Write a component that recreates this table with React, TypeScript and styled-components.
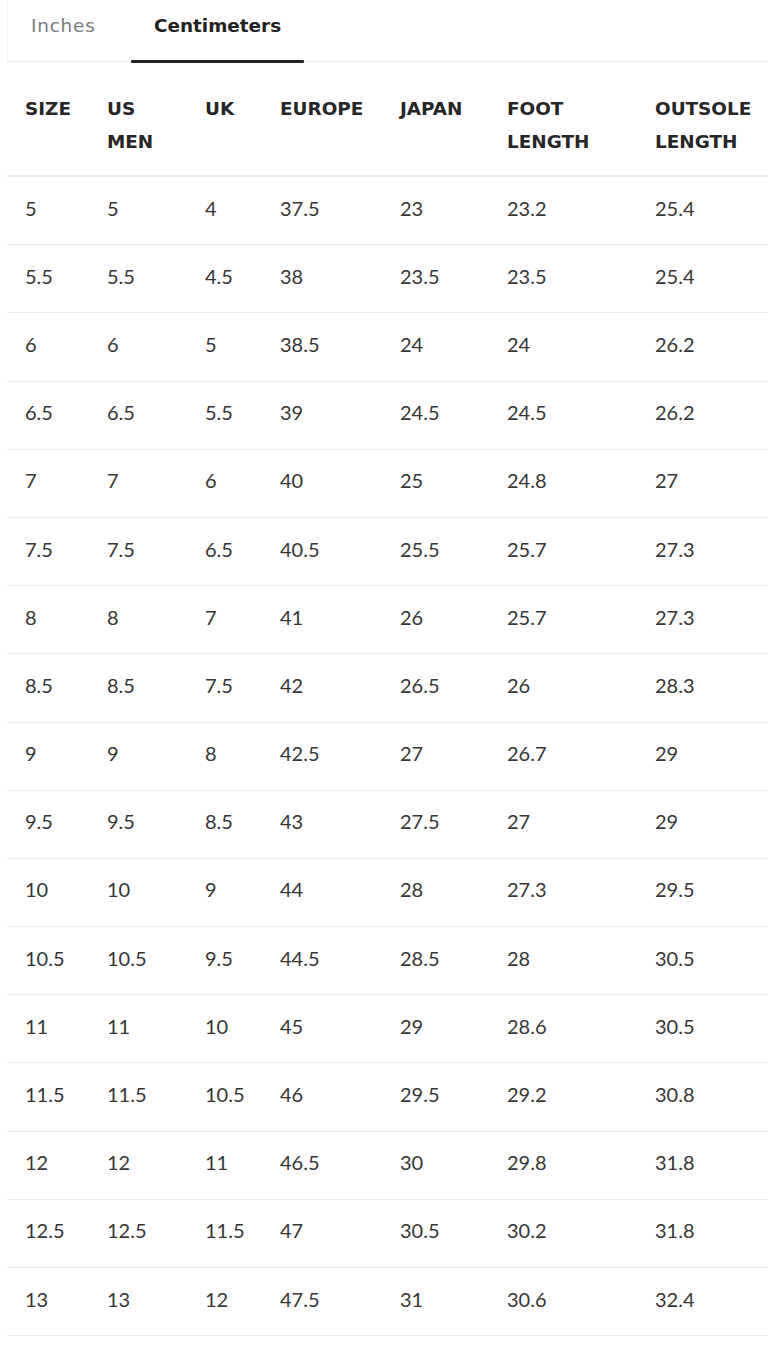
import React from "react";
import styled, { createGlobalStyle } from "styled-components";

const Global = createGlobalStyle`
  html, body { margin: 0; padding: 0; background: #fff; }
  body { font-family: "Lato", "Open Sans", sans-serif; -webkit-font-smoothing: antialiased; }
`;

const Page = styled.div`
  padding-left: 7px;
  width: 761px;
`;

const Tabs = styled.div`
  display: grid;
  grid-template-columns: 123px 173px;
  height: 62px;
  border-bottom: 1px solid #ececec;
  border-left: 1px solid #f3f3f3;
  box-sizing: border-box;
`;

const Tab = styled.div<{ $active?: boolean }>`
  position: relative;
  padding: 15px 0 0 23px;
  font-family: "DejaVu Sans", "Lato", sans-serif;
  font-size: 18.4px;
  font-weight: ${(p) => (p.$active ? 700 : 400)};
  color: ${(p) => (p.$active ? "#222" : "#7a7a7a")};
  letter-spacing: ${(p) => (p.$active ? "0" : "0.8px")};
  ${(p) =>
    p.$active &&
    `&::after {
      content: "";
      position: absolute;
      left: 0;
      right: 0;
      bottom: -2px;
      height: 3px;
      background: #222;
      border-radius: 1px;
    }`}
`;

const Grid = styled.div`
  display: grid;
  grid-template-columns: 82px 98px 75px 120px 107px 148px 1fr;
`;

const HeadCell = styled.div`
  padding: 30px 0 17px 18px;
  font-family: "DejaVu Sans", "Roboto", sans-serif;
  font-weight: 700;
  font-size: 18.4px;
  line-height: 33px;
  color: #262626;
  border-bottom: 2px solid #e8e8e8;
`;

const Cell = styled.div`
  height: 61.19px;
  box-sizing: content-box;
  display: flex;
  align-items: center;
  padding: 0 0 6px 18px;
  font-size: 20px;
  color: #363636;
  border-bottom: 1px solid #ececec;
`;

const headers = ["SIZE", "US MEN", "UK", "EUROPE", "JAPAN", "FOOT LENGTH", "OUTSOLE LENGTH"];

const rows: string[][] = [
  ["5", "5", "4", "37.5", "23", "23.2", "25.4"],
  ["5.5", "5.5", "4.5", "38", "23.5", "23.5", "25.4"],
  ["6", "6", "5", "38.5", "24", "24", "26.2"],
  ["6.5", "6.5", "5.5", "39", "24.5", "24.5", "26.2"],
  ["7", "7", "6", "40", "25", "24.8", "27"],
  ["7.5", "7.5", "6.5", "40.5", "25.5", "25.7", "27.3"],
  ["8", "8", "7", "41", "26", "25.7", "27.3"],
  ["8.5", "8.5", "7.5", "42", "26.5", "26", "28.3"],
  ["9", "9", "8", "42.5", "27", "26.7", "29"],
  ["9.5", "9.5", "8.5", "43", "27.5", "27", "29"],
  ["10", "10", "9", "44", "28", "27.3", "29.5"],
  ["10.5", "10.5", "9.5", "44.5", "28.5", "28", "30.5"],
  ["11", "11", "10", "45", "29", "28.6", "30.5"],
  ["11.5", "11.5", "10.5", "46", "29.5", "29.2", "30.8"],
  ["12", "12", "11", "46.5", "30", "29.8", "31.8"],
  ["12.5", "12.5", "11.5", "47", "30.5", "30.2", "31.8"],
  ["13", "13", "12", "47.5", "31", "30.6", "32.4"],
];

export default function App() {
  return (
    <Page>
      <Global />
      <Tabs>
        <Tab>Inches</Tab>
        <Tab $active>Centimeters</Tab>
      </Tabs>
      <Grid>
        {headers.map((h) => (
          <HeadCell key={h}>{h}</HeadCell>
        ))}
        {rows.map((r, i) =>
          r.map((c, j) => <Cell key={`${i}-${j}`}>{c}</Cell>)
        )}
      </Grid>
    </Page>
  );
}
